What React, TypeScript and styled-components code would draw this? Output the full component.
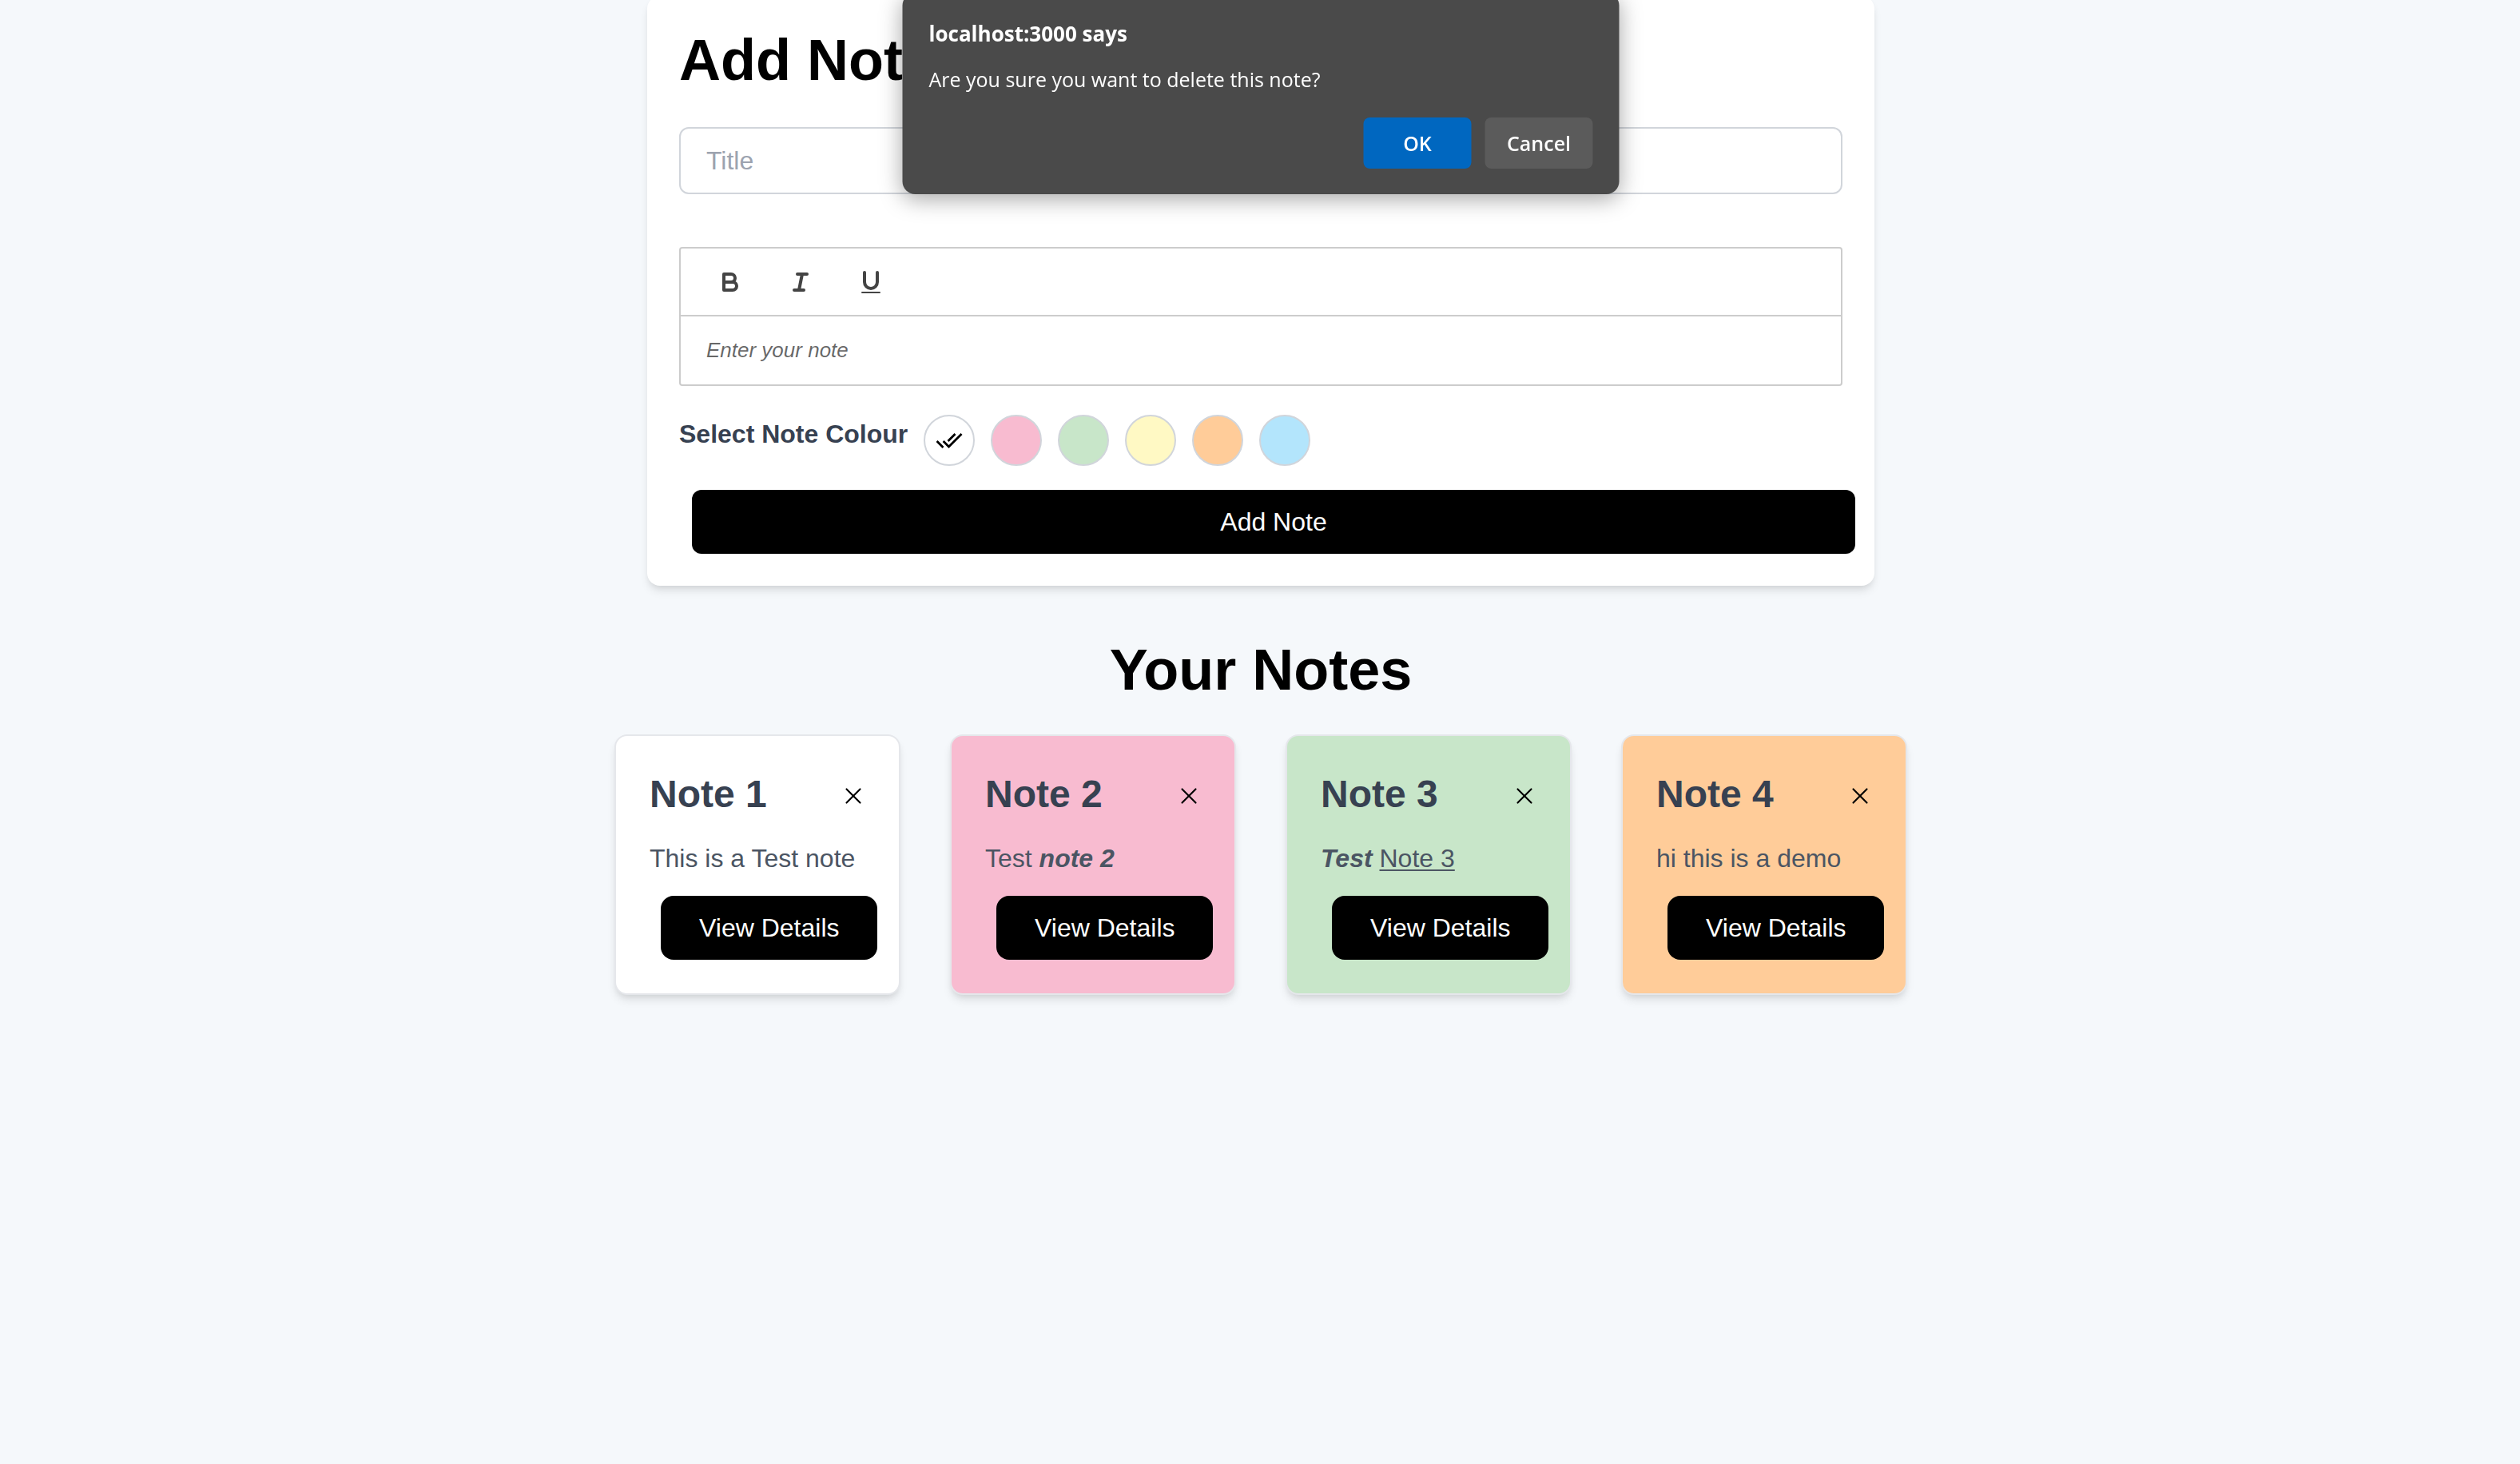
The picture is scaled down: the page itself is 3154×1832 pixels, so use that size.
import React from "react";
import styled, { createGlobalStyle } from "styled-components";
import { MdDoneAll } from "react-icons/md";
import { X } from "lucide-react";

const GlobalStyle = createGlobalStyle`
  html, body { margin: 0; padding: 0; }
  body {
    background: #f5f8fb;
    font-family: "Liberation Sans", Arial, Helvetica, sans-serif;
  }
  * { box-sizing: border-box; }
`;

const Page = styled.main`
  display: flex;
  flex-direction: column;
  align-items: center;
  min-height: 100vh;
  padding-left: 2px;
`;

const FormCard = styled.section`
  width: 1536px;
  margin-top: -5px;
  padding: 40px;
  background: #fff;
  border-radius: 16px;
  box-shadow: 0 8px 12px -2px rgba(0, 0, 0, 0.1), 0 4px 8px -4px rgba(0, 0, 0, 0.1);
`;

const FormHeading = styled.h1`
  margin: 0 0 44px;
  font-size: 72px;
  line-height: 80px;
  font-weight: 700;
  color: #000;
`;

const TitleInput = styled.input`
  display: block;
  width: 100%;
  height: 84px;
  padding: 0 32px;
  border: 2px solid #d1d5db;
  border-radius: 12px;
  background: #fff;
  font-family: inherit;
  font-size: 32px;
  color: #111827;
  outline: none;
  &::placeholder {
    color: #9ca3af;
  }
`;

const Editor = styled.div`
  margin-top: 66px;
  border: 2px solid #ccc;
  border-radius: 4px;
`;

const Toolbar = styled.div`
  display: flex;
  align-items: center;
  height: 85px;
  padding-left: 18px;
  border-bottom: 2px solid #ccc;
`;

const ToolButton = styled.button`
  display: flex;
  align-items: center;
  justify-content: center;
  width: 88px;
  height: 48px;
  padding: 0;
  border: none;
  background: none;
  cursor: pointer;
  svg {
    width: 36px;
    height: 36px;
  }
  .stroke {
    fill: none;
    stroke: #444;
    stroke-width: 2;
    stroke-linecap: round;
    stroke-linejoin: round;
  }
  .fill {
    fill: #444;
  }
`;

const EditorBody = styled.div`
  display: flex;
  align-items: center;
  height: 85px;
  padding: 0 32px;
  font-size: 26px;
  font-style: italic;
  color: rgba(0, 0, 0, 0.6);
`;

const ColourRow = styled.div`
  display: flex;
  align-items: center;
  gap: 20px;
  margin-top: 36px;
`;

const ColourLabel = styled.span`
  margin-bottom: 16px;
  font-size: 32px;
  line-height: 48px;
  font-weight: 700;
  color: #374151;
`;

const Swatch = styled.button<{ $bg: string }>`
  display: flex;
  align-items: center;
  justify-content: center;
  width: 64px;
  height: 64px;
  padding: 0;
  border-radius: 50%;
  border: 2px solid #d1d5db;
  background: ${(p) => p.$bg};
  cursor: pointer;
`;

const AddButton = styled.button`
  display: block;
  width: 100%;
  height: 80px;
  margin: 30px 0 0 16px;
  border: none;
  border-radius: 12px;
  background: #000;
  color: #fff;
  font-family: inherit;
  font-size: 32px;
  cursor: pointer;
`;

const SectionHeading = styled.h2`
  margin: 65px 0 41px;
  font-size: 72px;
  line-height: 80px;
  font-weight: 700;
  color: #000;
  text-align: center;
`;

const NotesRow = styled.div`
  display: flex;
  justify-content: center;
  gap: 62px;
`;

const NoteCard = styled.article<{ $bg: string }>`
  width: 358px;
  padding: 44px 42px 42px;
  border: 2px solid #e5e7eb;
  border-radius: 16px;
  background: ${(p) => p.$bg};
  box-shadow: 0 8px 12px -2px rgba(0, 0, 0, 0.1), 0 4px 8px -4px rgba(0, 0, 0, 0.1);
`;

const NoteHeader = styled.div`
  display: flex;
  align-items: center;
  justify-content: space-between;
  height: 58px;
`;

const NoteTitle = styled.h3`
  margin: 0;
  font-size: 48px;
  line-height: 58px;
  font-weight: 700;
  color: #374151;
`;

const CloseButton = styled.button`
  display: flex;
  align-items: center;
  justify-content: center;
  width: 34px;
  height: 34px;
  margin: 4px -2px 0 0;
  padding: 0;
  border: none;
  background: none;
  color: #000;
  cursor: pointer;
`;

const NoteBody = styled.p`
  margin: 27px 0 0;
  font-size: 32px;
  line-height: 48px;
  color: #4b5563;
  white-space: nowrap;
  u {
    text-decoration-thickness: 2px;
    text-underline-offset: 3px;
  }
`;

const ViewButton = styled.button`
  display: block;
  height: 80px;
  margin: 23px 0 0 14px;
  padding: 0 48px;
  border: none;
  border-radius: 16px;
  background: #000;
  color: #fff;
  font-family: inherit;
  font-size: 32px;
  white-space: nowrap;
  cursor: pointer;
`;

const Alert = styled.div`
  position: fixed;
  top: -9px;
  left: 50%;
  transform: translateX(-50%);
  margin-left: 1px;
  width: 897px;
  padding: 32px 33px;
  background: #4a4a4a;
  border-radius: 16px;
  box-shadow: 0 6px 28px rgba(0, 0, 0, 0.35);
  font-family: "Open Sans", "Noto Sans", sans-serif;
  color: #fff;
`;

const AlertTitle = styled.div`
  font-size: 26px;
  line-height: 38px;
  font-weight: 700;
`;

const AlertMessage = styled.div`
  margin-top: 19px;
  font-size: 25px;
  line-height: 38px;
`;

const AlertActions = styled.div`
  display: flex;
  justify-content: flex-end;
  gap: 17px;
  margin-top: 29px;
`;

const AlertButton = styled.button<{ $bg: string }>`
  width: 135px;
  height: 64px;
  border: none;
  border-radius: 8px;
  background: ${(p) => p.$bg};
  color: #fff;
  font-family: inherit;
  font-size: 25px;
  font-weight: 600;
  cursor: pointer;
`;

const BoldIcon = () => (
  <svg viewBox="0 0 18 18">
    <path className="stroke" d="M5,4H9.5A2.5,2.5,0,0,1,12,6.5v0A2.5,2.5,0,0,1,9.5,9H5A0,0,0,0,1,5,9V4A0,0,0,0,1,5,4Z" />
    <path className="stroke" d="M5,9h5.5A2.5,2.5,0,0,1,13,11.5v0A2.5,2.5,0,0,1,10.5,14H5a0,0,0,0,1,0,0V9A0,0,0,0,1,5,9Z" />
  </svg>
);

const ItalicIcon = () => (
  <svg viewBox="0 0 18 18">
    <line className="stroke" x1="7" x2="13" y1="4" y2="4" />
    <line className="stroke" x1="5" x2="11" y1="14" y2="14" />
    <line className="stroke" x1="8" x2="10" y1="14" y2="4" />
  </svg>
);

const UnderlineIcon = () => (
  <svg viewBox="0 0 18 18">
    <path className="stroke" d="M5,3V9a4.012,4.012,0,0,0,4,4H9a4.012,4.012,0,0,0,4-4V3" />
    <rect className="fill" height="1" rx="0.5" ry="0.5" width="12" x="3" y="15" />
  </svg>
);

const swatches = ["#ffffff", "#f8bbd0", "#c8e6c9", "#fff9c4", "#ffcc99", "#b3e5fc"];

const notes: { title: string; bg: string; body: React.ReactNode }[] = [
  { title: "Note 1", bg: "#ffffff", body: "This is a Test note" },
  {
    title: "Note 2",
    bg: "#f8bbd0",
    body: (
      <>
        Test{" "}
        <strong>
          <em>note 2</em>
        </strong>
      </>
    ),
  },
  {
    title: "Note 3",
    bg: "#c8e6c9",
    body: (
      <>
        <strong>
          <em>Test</em>
        </strong>{" "}
        <u>Note 3</u>
      </>
    ),
  },
  { title: "Note 4", bg: "#ffcc99", body: "hi this is a demo" },
];

export default function App() {
  return (
    <>
      <GlobalStyle />
      <Page>
        <FormCard>
          <FormHeading>Add Note</FormHeading>
          <TitleInput placeholder="Title" />
          <Editor>
            <Toolbar>
              <ToolButton aria-label="Bold">
                <BoldIcon />
              </ToolButton>
              <ToolButton aria-label="Italic">
                <ItalicIcon />
              </ToolButton>
              <ToolButton aria-label="Underline">
                <UnderlineIcon />
              </ToolButton>
            </Toolbar>
            <EditorBody>Enter your note</EditorBody>
          </Editor>
          <ColourRow>
            <ColourLabel>Select Note Colour</ColourLabel>
            {swatches.map((c, i) => (
              <Swatch key={c} $bg={c} aria-label={`Colour ${c}`}>
                {i === 0 && <MdDoneAll size={34} color="#000" />}
              </Swatch>
            ))}
          </ColourRow>
          <AddButton>Add Note</AddButton>
        </FormCard>

        <SectionHeading>Your Notes</SectionHeading>
        <NotesRow>
          {notes.map((n) => (
            <NoteCard key={n.title} $bg={n.bg}>
              <NoteHeader>
                <NoteTitle>{n.title}</NoteTitle>
                <CloseButton aria-label="Delete note">
                  <X size={34} strokeWidth={1.5} />
                </CloseButton>
              </NoteHeader>
              <NoteBody>{n.body}</NoteBody>
              <ViewButton>View Details</ViewButton>
            </NoteCard>
          ))}
        </NotesRow>
      </Page>

      <Alert role="alertdialog">
        <AlertTitle>localhost:3000 says</AlertTitle>
        <AlertMessage>Are you sure you want to delete this note?</AlertMessage>
        <AlertActions>
          <AlertButton $bg="#0067c0">OK</AlertButton>
          <AlertButton $bg="#5b5b5b">Cancel</AlertButton>
        </AlertActions>
      </Alert>
    </>
  );
}
